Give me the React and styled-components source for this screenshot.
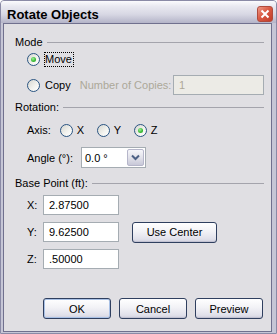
import React from 'react';
import styled, { createGlobalStyle } from 'styled-components';

const GlobalStyle = createGlobalStyle`
  html, body {
    margin: 0;
    padding: 0;
    background: #ffffff;
  }
  body {
    font-family: Tahoma, "Liberation Sans", Arial, sans-serif;
    font-size: 11px;
    color: #000000;
  }
  * {
    box-sizing: border-box;
  }
`;

const Window = styled.div`
  width: 277px;
  height: 334px;
  display: flex;
  flex-direction: column;
  border: 1px solid #8a8aa6;
  border-radius: 4px 4px 0 0;
  background: #c6c6d6;
  overflow: hidden;
`;

const TitleBar = styled.div`
  height: 22px;
  flex: none;
  display: flex;
  align-items: center;
  padding: 4px 3px 0 6px;
  background: linear-gradient(
    to bottom,
    #fbfbfd 0%,
    #e8e8f0 25%,
    #d8d8e4 60%,
    #b4b4c8 100%
  );
`;

const Title = styled.span`
  font-size: 13px;
  font-weight: bold;
  color: #000;
`;

const CloseButton = styled.span`
  margin-left: auto;
  width: 16px;
  height: 16px;
  border: 1px solid #b04a3c;
  border-radius: 3px;
  background: linear-gradient(135deg, #ee9a88 0%, #da5a44 45%, #c23c28 100%);
  display: flex;
  align-items: center;
  justify-content: center;
`;

const BodyFrame = styled.div`
  flex: 1;
  display: flex;
  padding: 0 4px 1px 2px;
`;

const Body = styled.div`
  flex: 1;
  display: flex;
  flex-direction: column;
  border: 1px solid #70708e;
  background: #e0dfe3;
  padding: 11px 7px 0 11px;
`;

// group caption followed by an etched rule
const Legend = styled.div`
  height: 14px;
  display: flex;
  align-items: center;
  gap: 4px;
  margin-top: ${(p) => p.$mt || 0}px;
  &::after {
    content: '';
    flex: 1;
    height: 1px;
    background: #a4a4ac;
  }
`;

const Row = styled.div`
  height: ${(p) => p.$h}px;
  margin-top: ${(p) => p.$mt || 0}px;
  padding-left: ${(p) => (p.$flush ? 0 : 12)}px;
  padding-right: ${(p) => p.$pr || 0}px;
  display: flex;
  align-items: center;
  gap: ${(p) => p.$gap || 0}px;
  justify-content: ${(p) => (p.$end ? 'flex-end' : 'flex-start')};
`;

const Radio = styled.span`
  width: 13px;
  height: 13px;
  flex: none;
  border-radius: 50%;
  border: 1px solid #2a5482;
  background: linear-gradient(135deg, #d6d6d0 0%, #f4f4f0 60%, #ffffff 100%);
  display: inline-flex;
  align-items: center;
  justify-content: center;
  &::after {
    content: '';
    width: 5px;
    height: 5px;
    border-radius: 50%;
    background: radial-gradient(circle at 40% 35%, #9ef09a 0%, #3cbc38 55%, #1f9a1c 100%);
    display: ${(p) => (p.$checked ? 'block' : 'none')};
  }
`;

const Choice = styled.label`
  display: flex;
  align-items: center;
  gap: 4px;
  width: ${(p) => (p.$w ? `${p.$w}px` : 'auto')};
  flex: none;
`;

const ChoiceText = styled.span`
  border: 1px dotted ${(p) => (p.$focus ? '#000' : 'transparent')};
  padding: 0 1px 0 0;
  line-height: 13px;
`;

const Label = styled.span`
  color: ${(p) => (p.$disabled ? '#aca899' : '#000')};
  margin-left: ${(p) => p.$ml || 0}px;
  margin-right: ${(p) => p.$mr || 0}px;
`;

const Field = styled.div`
  width: ${(p) => p.$w}px;
  height: ${(p) => p.$h || 20}px;
  margin-left: ${(p) => (p.$push ? 'auto' : '0')};
  flex: none;
  border: 1px solid #a5acb2;
  background: ${(p) => (p.$disabled ? '#ecebe6' : '#ffffff')};
  color: ${(p) => (p.$disabled ? '#aca899' : '#000')};
  display: flex;
  align-items: center;
  padding-left: 5px;
`;

const FieldLabel = styled.span`
  width: 16px;
  flex: none;
`;

const Combo = styled.div`
  width: 65px;
  height: 21px;
  flex: none;
  border: 1px solid #a5acb2;
  background: #ffffff;
  display: flex;
  align-items: stretch;
`;

const ComboText = styled.span`
  flex: 1;
  display: flex;
  align-items: center;
  padding-left: 3px;
`;

const DropButton = styled.span`
  width: 17px;
  margin: 1px;
  border: 1px solid #b6b6ca;
  border-radius: 2px;
  background: linear-gradient(to bottom, #f6f6fa 0%, #e2e2ea 50%, #c8c8d8 100%);
  display: flex;
  align-items: center;
  justify-content: center;
`;

const Button = styled.button`
  width: ${(p) => p.$w || 68}px;
  height: 21px;
  flex: none;
  margin-left: ${(p) => p.$ml || 0}px;
  padding: 0;
  font-family: inherit;
  font-size: 11px;
  color: #000;
  border: 1px solid #2f3f5f;
  border-radius: 3px;
  background: linear-gradient(to bottom, #ffffff 0%, #f2f2f6 45%, #e0e0ea 85%, #cfcfdc 100%);
  box-shadow: ${(p) => (p.$default ? 'inset 0 0 0 1px #a9c1e6' : 'inset 0 -1px 0 #c2c2d2')};
`;

export default function App() {
  return (
    <>
      <GlobalStyle />
      <Window>
        <TitleBar>
          <Title>Rotate Objects</Title>
          <CloseButton>
            <svg width="10" height="10" viewBox="0 0 10 10">
              <path d="M1.5 1.5 L8.5 8.5 M8.5 1.5 L1.5 8.5" stroke="#ffffff" strokeWidth="2" />
            </svg>
          </CloseButton>
        </TitleBar>
        <BodyFrame>
          <Body>
            <Legend>Mode</Legend>
            <Row $h={15} $mt={3}>
              <Choice>
                <Radio $checked />
                <ChoiceText $focus>Move</ChoiceText>
              </Choice>
            </Row>
            <Row $h={20} $mt={8}>
              <Choice>
                <Radio />
                <ChoiceText>Copy</ChoiceText>
              </Choice>
              <Label $disabled $ml={7}>Number of Copies:</Label>
              <Field $w={91} $push $disabled>1</Field>
            </Row>

            <Legend $mt={5}>Rotation:</Legend>
            <Row $h={20} $mt={6}>
              <Label $mr={9}>Axis:</Label>
              <Choice $w={37}>
                <Radio />
                <span>X</span>
              </Choice>
              <Choice $w={37}>
                <Radio />
                <span>Y</span>
              </Choice>
              <Choice>
                <Radio $checked />
                <span>Z</span>
              </Choice>
            </Row>
            <Row $h={21} $mt={7} $gap={8}>
              <Label>Angle (°):</Label>
              <Combo>
                <ComboText>0.0 °</ComboText>
                <DropButton>
                  <svg width="9" height="7" viewBox="0 0 9 7">
                    <path d="M1 1.5 L4.5 5 L8 1.5" fill="none" stroke="#4d6185" strokeWidth="2" />
                  </svg>
                </DropButton>
              </Combo>
            </Row>

            <Legend $mt={8}>Base Point (ft):</Legend>
            <Row $h={20} $mt={5}>
              <FieldLabel>X:</FieldLabel>
              <Field $w={76}>2.87500</Field>
            </Row>
            <Row $h={20} $mt={7}>
              <FieldLabel>Y:</FieldLabel>
              <Field $w={76}>9.62500</Field>
              <Button $w={85} $ml={13}>Use Center</Button>
            </Row>
            <Row $h={20} $mt={7}>
              <FieldLabel>Z:</FieldLabel>
              <Field $w={76}>.50000</Field>
            </Row>

            <Row $h={21} $mt={29} $gap={8} $pr={1} $end $flush>
              <Button $default>OK</Button>
              <Button>Cancel</Button>
              <Button>Preview</Button>
            </Row>
          </Body>
        </BodyFrame>
      </Window>
    </>
  );
}
